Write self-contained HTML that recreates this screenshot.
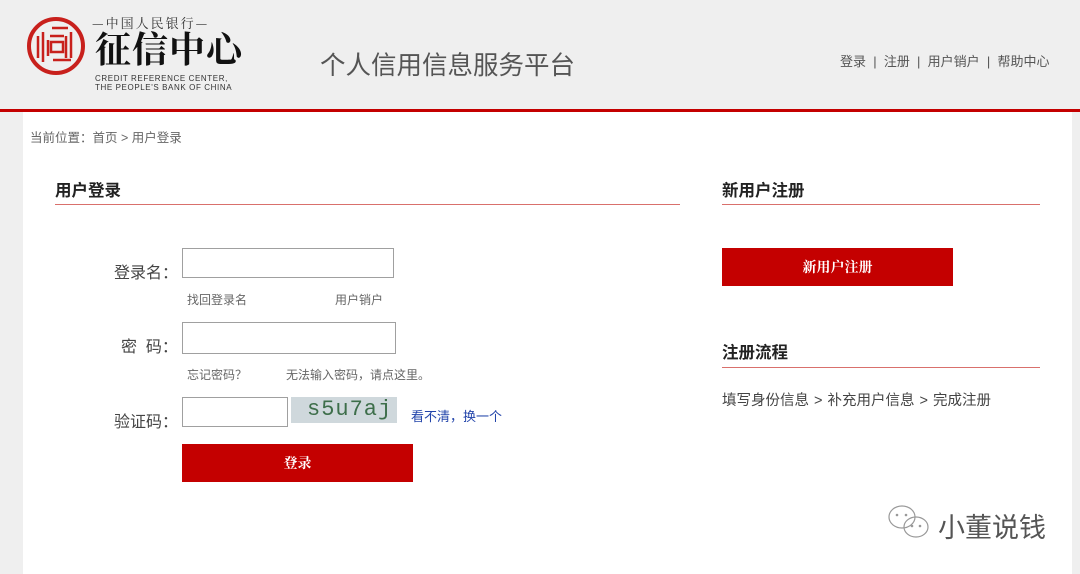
<!DOCTYPE html>
<html><head><meta charset="utf-8"><style>
*{margin:0;padding:0;box-sizing:border-box}
body{width:1080px;height:574px;background:#efefef;font-family:"Liberation Sans","Noto Sans CJK SC",sans-serif;position:relative;overflow:hidden;color:#333}
.a{position:absolute;white-space:nowrap}
.hdr{position:absolute;left:0;top:0;width:1080px;height:110px;background:#efefef}
.rl{position:absolute;left:0;top:109px;width:1080px;height:3px;background:#c40000}
.main{position:absolute;left:23px;top:112px;width:1049px;height:462px;background:#fff}
.inp{position:absolute;border:1px solid #a0a0a0;background:#fff}
.btn{position:absolute;background:#c40000;color:#fff;font-size:14px;text-align:center;font-family:"Noto Serif CJK SC",serif;font-weight:bold}
.h{font-size:16px;font-weight:bold;color:#222}
.ln{position:absolute;height:1px;background:#d9706c}
.lbl{font-size:16px;color:#444}
.s{font-size:12px;color:#666}
</style></head><body>
<div class="hdr"></div>
<svg class="a" style="left:26px;top:16px" width="60" height="60" viewBox="0 0 60 60">
<circle cx="30" cy="30" r="27" fill="none" stroke="#c8201c" stroke-width="4"/>
<g stroke="#c8201c" stroke-width="2.5" fill="none">
<path d="M12 20v22M17 16v30M22 24v16M26 12h16M24 20h14M25 26h12v10H25zM27 44h18M40 20v22M45 16v26"/>
</g></svg>
<div class="a" style="left:92px;top:13px;font-size:13px;color:#333;font-family:'Noto Serif CJK SC',serif;letter-spacing:2px">—中国人民银行—</div>
<div class="a" style="left:95px;top:28px;font-size:36px;line-height:40px;color:#111;font-family:'Noto Serif CJK SC',serif;font-weight:bold;letter-spacing:1px">征信中心</div>
<div class="a" style="left:95px;top:74px;font-size:8px;line-height:9px;color:#333;letter-spacing:.6px">CREDIT REFERENCE CENTER,<br>THE PEOPLE'S BANK OF CHINA</div>
<div class="a" style="left:320px;top:45px;font-size:25.5px;color:#555">个人信用信息服务平台</div>
<div class="a" style="left:840px;top:51px;font-size:13px;color:#555">登录 &nbsp;|&nbsp; 注册 &nbsp;|&nbsp; 用户销户 &nbsp;|&nbsp; 帮助中心</div>
<div class="rl"></div>
<div class="main"></div>
<div class="a" style="left:30px;top:127px;font-size:12.5px;color:#666">当前位置：首页 &gt; 用户登录</div>
<div class="a h" style="left:55px;top:177px;font-size:16.5px">用户登录</div>
<div class="ln" style="left:55px;top:204px;width:625px"></div>
<div class="a lbl" style="left:114px;top:259px">登录名：</div>
<div class="inp" style="left:182px;top:248px;width:212px;height:30px"></div>
<div class="a s" style="left:187px;top:291px">找回登录名</div>
<div class="a s" style="left:335px;top:291px">用户销户</div>
<div class="a lbl" style="left:121px;top:333px">密 &nbsp;码：</div>
<div class="inp" style="left:182px;top:322px;width:214px;height:32px"></div>
<div class="a s" style="left:187px;top:366px">忘记密码？</div>
<div class="a s" style="left:286px;top:366px">无法输入密码，请点这里。</div>
<div class="a lbl" style="left:114px;top:408px">验证码：</div>
<div class="inp" style="left:182px;top:397px;width:106px;height:30px"></div>
<div class="a" style="left:291px;top:397px;width:106px;height:26px;background:#cfd8dc;color:#3d6e4a;font-size:22px;font-family:'Liberation Mono',monospace;line-height:26px;padding-left:16px;letter-spacing:1px">s5u7aj</div>
<div class="a" style="left:411px;top:406px;font-size:13px;color:#2244aa">看不清，换一个</div>
<div class="btn" style="left:182px;top:444px;width:231px;height:38px;line-height:38px">登录</div>
<div class="a h" style="left:722px;top:177px;font-size:16.5px">新用户注册</div>
<div class="ln" style="left:722px;top:204px;width:318px"></div>
<div class="btn" style="left:722px;top:248px;width:231px;height:38px;line-height:38px">新用户注册</div>
<div class="a h" style="left:722px;top:339px;font-size:16.5px">注册流程</div>
<div class="ln" style="left:722px;top:367px;width:318px"></div>
<div class="a" style="left:722px;top:389px;font-size:14.5px;color:#444;word-spacing:1px">填写身份信息 &gt; 补充用户信息 &gt; 完成注册</div>
<svg class="a" style="left:886px;top:503px" width="46" height="40" viewBox="0 0 46 40"><g fill="none" stroke="#999" stroke-width="1.2"><ellipse cx="16" cy="14" rx="13" ry="11"/><ellipse cx="30" cy="24" rx="12" ry="10"/></g><g fill="#999"><circle cx="11" cy="12" r="1.3"/><circle cx="20" cy="12" r="1.3"/><circle cx="26" cy="23" r="1.3"/><circle cx="34" cy="23" r="1.3"/></g></svg>
<div class="a" style="left:938px;top:506px;font-size:27px;color:#555">小董说钱</div>
</body></html>
